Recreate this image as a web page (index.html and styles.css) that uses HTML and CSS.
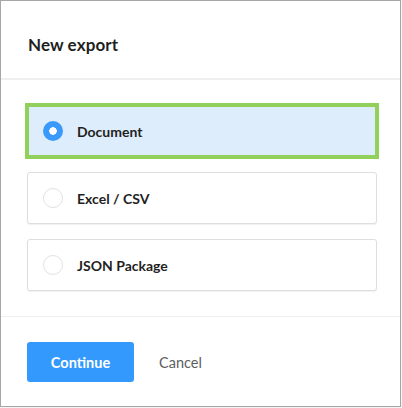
FILE: index.html
```html
<!DOCTYPE html>
<html lang="en">
<head>
<meta charset="utf-8">
<title>New export</title>
<link rel="stylesheet" href="styles.css">
</head>
<body>
<div class="modal">
  <div class="modal-header">
    <h1 class="modal-title">New export</h1>
  </div>
  <div class="modal-body">
    <div class="option option-selected">
      <span class="radio radio-on"></span>
      <span class="option-label">Document</span>
    </div>
    <div class="option">
      <span class="radio"></span>
      <span class="option-label">Excel / CSV</span>
    </div>
    <div class="option">
      <span class="radio"></span>
      <span class="option-label">JSON Package</span>
    </div>
  </div>
  <div class="modal-footer">
    <button class="btn-primary">Continue</button>
    <button class="btn-link">Cancel</button>
  </div>
</div>
</body>
</html>
```
FILE: styles.css
```css
* { box-sizing: border-box; }
html, body { margin: 0; padding: 0; background: #f4f4f4; }
body { font-family: Lato, "Noto Sans", sans-serif; color: #1f1f1f; }

.modal {
  width: 401px;
  height: 407px;
  background: #fff;
  border: 1px solid #a6a6a6;
  display: flex;
  flex-direction: column;
}

.modal-header {
  height: 79px;
  padding: 9px 0 0 27px;
  display: flex;
  align-items: center;
  border-bottom: 2px solid #efefef;
}
.modal-title {
  margin: 0;
  font-size: 17px;
  font-weight: 700;
  letter-spacing: 0.1px;
}

.modal-body {
  padding: 25px 0 25px 26px;
  display: flex;
  flex-direction: column;
  gap: 15px;
  border-bottom: 1px solid #efefef;
}

.option {
  width: 350px;
  height: 52px;
  border: 1px solid #dedede;
  border-radius: 3px;
  box-shadow: 0 1px 1px rgba(0,0,0,0.06);
  display: flex;
  align-items: center;
  padding-left: 15px;
  gap: 14px;
  background: #fff;
}
.option-selected {
  background: #deedfb;
  outline: 4px solid #91d05b;
  outline-offset: -2px;
  border-radius: 0;
}

.radio {
  width: 20px;
  height: 20px;
  border-radius: 50%;
  border: 1px solid #e2e2e2;
  background: #fff;
  flex: none;
}
.radio-on {
  border: none;
  background: radial-gradient(circle, #fff 0 3.5px, #3a9afc 4px);
}

.option-label {
  font-size: 14px;
  font-weight: 700;
}

.modal-footer {
  padding: 25px 0 0 26px;
  display: flex;
  align-items: center;
  gap: 25px;
}
.btn-primary {
  width: 107px;
  height: 40px;
  border: none;
  border-radius: 3px;
  background: #3399fd;
  color: #fff;
  font-family: inherit;
  font-size: 14.5px;
  font-weight: 700;
}
.btn-link {
  border: none;
  background: none;
  padding: 0;
  font-family: inherit;
  font-size: 14.5px;
  color: #5e5e5e;
}
```
